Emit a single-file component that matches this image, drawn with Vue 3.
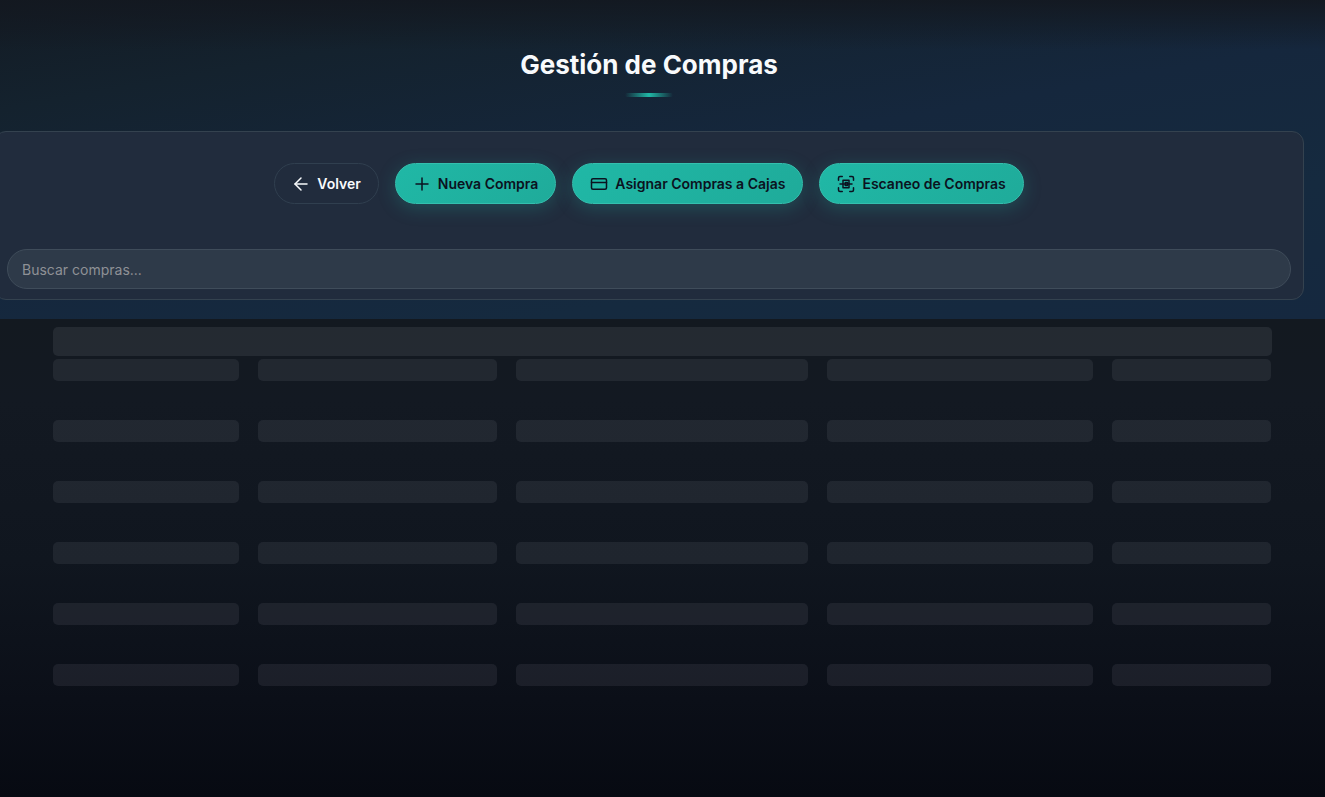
<template>
  <div class="page">
    <header class="hero">
      <h1 class="title">Gestión de Compras</h1>
      <span class="title-underline"></span>

      <section class="toolbar">
        <div class="actions">
          <button
            v-for="action in actions"
            :key="action.label"
            type="button"
            class="btn"
            :class="action.variant"
          >
            <svg class="icon" viewBox="0 0 24 24" aria-hidden="true">
              <path v-for="d in action.paths" :key="d" :d="d" />
            </svg>
            <span>{{ action.label }}</span>
          </button>
        </div>

        <input
          v-model="search"
          class="search"
          type="text"
          placeholder="Buscar compras..."
          aria-label="Buscar compras"
        />
      </section>
    </header>

    <!-- Loading skeleton -->
    <main class="skeleton" aria-busy="true">
      <div class="bone bone-header"></div>
      <div v-for="row in 6" :key="row" class="skeleton-row">
        <div v-for="col in 5" :key="col" class="bone"></div>
      </div>
    </main>
  </div>
</template>

<script setup>
import { ref } from 'vue'

const search = ref('')

const actions = [
  {
    label: 'Volver',
    variant: 'ghost',
    paths: ['M20 12H4', 'M12 4l-8 8 8 8']
  },
  {
    label: 'Nueva Compra',
    variant: 'primary',
    paths: ['M12 4v16', 'M4 12h16']
  },
  {
    label: 'Asignar Compras a Cajas',
    variant: 'primary',
    paths: ['M4 5h16a2 2 0 0 1 2 2v10a2 2 0 0 1-2 2H4a2 2 0 0 1-2-2V7a2 2 0 0 1 2-2z', 'M2 10h20']
  },
  {
    label: 'Escaneo de Compras',
    variant: 'primary',
    paths: [
      'M2 7V4a2 2 0 0 1 2-2h3',
      'M17 2h3a2 2 0 0 1 2 2v3',
      'M22 17v3a2 2 0 0 1-2 2h-3',
      'M7 22H4a2 2 0 0 1-2-2v-3',
      'M8 7h8v10H8z',
      'M11 10h3v4h-3z',
      'M4 12h16'
    ]
  }
]
</script>

<style>
body {
  margin: 0;
  background: #070a12;
}
</style>

<style scoped>
.page {
  display: flex;
  flex-direction: column;
  min-height: 100vh;
  overflow-x: hidden;
  font-family: Inter, 'Liberation Sans', sans-serif;
  color: #f8fafc;
  background: linear-gradient(180deg, #131920 320px, #131922 400px, #10161f 560px, #0b0f18 700px, #070a12 100%);
}

/* The panel bleeds slightly past the left edge */
.hero {
  display: flex;
  flex-direction: column;
  align-items: center;
  margin-left: -6px;
  padding: 48px 21px 19px 0;
  background:
    linear-gradient(180deg, rgba(19, 24, 32, 0.9), rgba(19, 24, 32, 0) 50px),
    linear-gradient(170deg, #131b24 0%, #14222e 20%, #15273d 50%, #152a3f 75%, #15283f 100%);
}

.title {
  margin: 0;
  font-size: 26px;
  font-weight: 700;
  line-height: 34px;
}

.title-underline {
  width: 48px;
  height: 4px;
  margin: 11px 0 34px;
  border-radius: 2px;
  background: linear-gradient(90deg, transparent, #20b8a6, transparent);
}

.toolbar {
  box-sizing: border-box;
  align-self: stretch;
  padding: 31px 12px 10px;
  border: 1px solid #34424f;
  border-radius: 12px;
  background: #212c3d;
}

.actions {
  display: flex;
  flex-wrap: wrap;
  justify-content: center;
  gap: 16px;
  margin-bottom: 45px;
}

.btn {
  display: inline-flex;
  align-items: center;
  gap: 7px;
  height: 41px;
  padding: 0 17px;
  border: 1px solid #34c0ae;
  border-radius: 21px;
  font-family: inherit;
  font-size: 14px;
  font-weight: 600;
  cursor: pointer;
}

.primary {
  color: #0b1220;
  background: linear-gradient(135deg, #20b8a6, #1fab9a);
  box-shadow: 0 4px 18px rgba(32, 184, 166, 0.25);
}

.ghost {
  border-color: #303f4f;
  color: #f8fafc;
  background: transparent;
}

.icon {
  width: 18px;
  height: 18px;
  fill: none;
  stroke: currentColor;
  stroke-width: 2;
  stroke-linecap: round;
  stroke-linejoin: round;
}

.search {
  display: block;
  box-sizing: border-box;
  width: 100%;
  height: 40px;
  padding: 0 14px;
  border: 1px solid #3f4c5a;
  border-radius: 20px;
  outline: none;
  font-family: inherit;
  font-size: 14px;
  color: #f8fafc;
  background: #2e3a49;
}

.search::placeholder {
  color: #8e9196;
  opacity: 1;
}

.skeleton {
  display: flex;
  flex-direction: column;
  padding: 8px 53px 0;
}

.skeleton-row {
  display: grid;
  grid-template-columns: 186fr 239fr 292fr 266fr 159fr;
  gap: 19px;
  margin: 0 1px 39px 0;
}

.bone {
  height: 22px;
  border-radius: 5px;
  background: rgba(240, 240, 255, 0.07);
}

.bone-header {
  height: 29px;
  margin-bottom: 3px;
  background: rgba(240, 240, 255, 0.08);
}
</style>
